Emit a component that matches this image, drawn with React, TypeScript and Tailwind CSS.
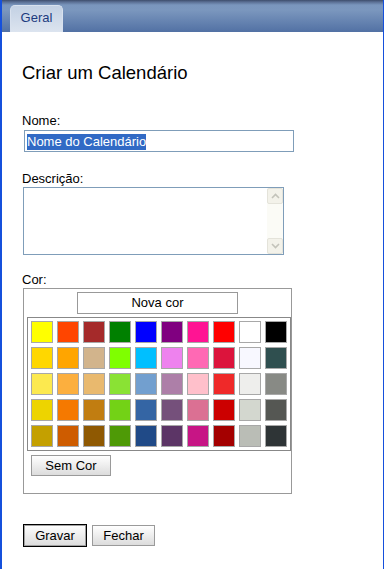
const rows = [
  ["#ffff00", "#ff4500", "#a52a2a", "#008000", "#0000ff", "#800080", "#ff1493", "#ff0000", "#ffffff", "#000000"],
  ["#ffd700", "#ffa500", "#d2b48c", "#7fff00", "#00bfff", "#ee82ee", "#ff69b4", "#dc143c", "#f8f8ff", "#2f4f4f"],
  ["#fce94f", "#fcaf3e", "#e9b96e", "#8ae234", "#729fcf", "#ad7fa8", "#ffc0cb", "#ef2929", "#eeeeec", "#888a85"],
  ["#edd400", "#f57900", "#c17d11", "#73d216", "#3465a4", "#75507b", "#db7093", "#cc0000", "#d3d7cf", "#555753"],
  ["#c4a000", "#ce5c00", "#8f5902", "#4e9a06", "#204a87", "#5c3566", "#c71585", "#a40000", "#babdb6", "#2e3436"],
];

function Chevron({ up }: { up?: boolean }) {
  return (
    <svg width="9" height="6" viewBox="0 0 9 6" className="text-[#c3c3ba]">
      <path
        d={up ? "M1 5 L4.5 1.5 L8 5" : "M1 1 L4.5 4.5 L8 1"}
        fill="none"
        stroke="currentColor"
        strokeWidth="1.6"
      />
    </svg>
  );
}

export default function App() {
  return (
    <div className="h-[569px] w-[384px] border-l-2 border-r border-[#1550dc] bg-white font-['Liberation_Sans',Arial,sans-serif] text-[13px] text-black">
      {/* Tab bar */}
      <div className="flex h-8 items-end bg-[linear-gradient(to_bottom,#3d4d6b_0px,#5a6f94_2px,#7a96bd_5px,#7b97be_10px,#5271a4_32px)] pl-2">
        <div className="flex h-[27px] w-[53px] justify-center rounded-t-[5px] border border-b-0 border-[#d8e1ee] bg-[linear-gradient(to_bottom,#c3d1e4,#dce4ef)] pt-1 leading-4 text-[#1c3b7e]">
          Geral
        </div>
      </div>

      <div className="pl-5">
        <h1 className="mt-[30px] text-[18.5px] leading-[22px] font-normal">Criar um Calendário</h1>

        <div className="mt-[29px] leading-4">Nome:</div>
        <div className="mt-px ml-[2px] h-[22px] w-[270px] border border-[#7f9db9] pt-[1px] pl-[2px]">
          <span className="inline-block h-4 bg-[#316ac5] leading-4 text-white">Nome do Calendário</span>
        </div>

        <div className="mt-[19px] leading-4">Descrição:</div>
        <div className="ml-px flex h-[68px] w-[261px] justify-end border border-[#7f9db9]">
          <div className="flex w-4 flex-col justify-between bg-[#fbfbf6]">
            <div className="flex h-4 items-center justify-center rounded-[2px] border border-[#e4e3da] bg-[#f3f2ea]">
              <Chevron up />
            </div>
            <div className="flex h-4 items-center justify-center rounded-[2px] border border-[#e4e3da] bg-[#f3f2ea]">
              <Chevron />
            </div>
          </div>
        </div>

        <div className="mt-[17px] leading-4">Cor:</div>
        <div className="ml-px h-[206px] w-[269px] border border-[#999999]">
          <div className="mx-auto mt-[3px] h-[22px] w-[161px] border border-[#999999] text-center leading-[19px]">
            Nova cor
          </div>
          <div className="mt-[3px] ml-[3px] grid w-[264px] grid-cols-10 gap-1 border border-[#888888] p-[3px]">
            {rows.flat().map((c, i) => (
              <div key={i} className="h-[22px] w-[22px] border border-[#a8a8a8]" style={{ backgroundColor: c }} />
            ))}
          </div>
          <button className="mt-1 ml-[7px] h-[21px] w-20 border border-[#9a9a9a] bg-gradient-to-b from-white to-[#dcdcdc] leading-[18px]">
            Sem Cor
          </button>
        </div>

        <div className="mt-[30px] flex items-center gap-[5px] pl-px">
          <button className="h-[23px] w-16 border border-black bg-gradient-to-b from-white to-[#dcdcdc] leading-[19px] shadow-[inset_0_0_0_1px_#a0a0a0]">
            Gravar
          </button>
          <button className="h-[21px] w-[63px] border border-[#9a9a9a] bg-gradient-to-b from-white to-[#dcdcdc] leading-[18px]">
            Fechar
          </button>
        </div>
      </div>
    </div>
  );
}
